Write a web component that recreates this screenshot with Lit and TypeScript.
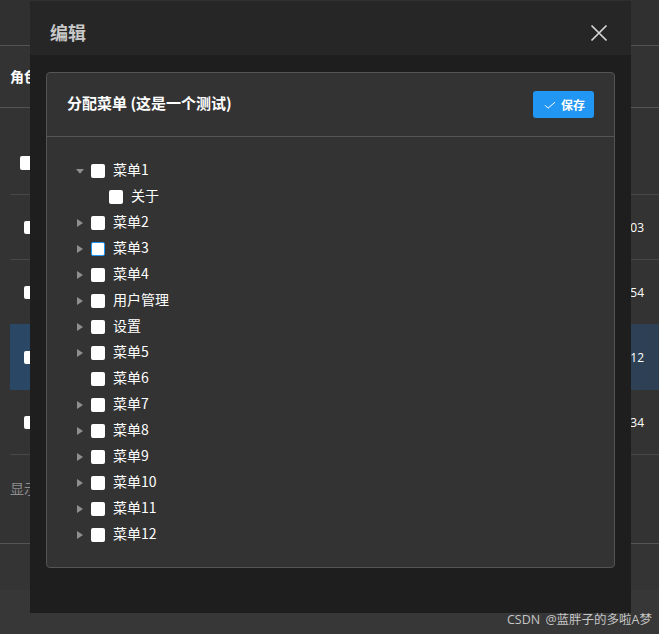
import { LitElement, html, css } from "lit";
import { customElement } from "lit/decorators.js";

interface Node { label: string; arrow?: "open" | "closed"; child?: boolean; focus?: boolean; }
const nodes: Node[] = [
  { label: "菜单1", arrow: "open" },
  { label: "关于", child: true },
  { label: "菜单2", arrow: "closed" },
  { label: "菜单3", arrow: "closed", focus: true },
  { label: "菜单4", arrow: "closed" },
  { label: "用户管理", arrow: "closed" },
  { label: "设置", arrow: "closed" },
  { label: "菜单5", arrow: "closed" },
  { label: "菜单6" },
  { label: "菜单7", arrow: "closed" },
  { label: "菜单8", arrow: "closed" },
  { label: "菜单9", arrow: "closed" },
  { label: "菜单10", arrow: "closed" },
  { label: "菜单11", arrow: "closed" },
  { label: "菜单12", arrow: "closed" },
];
const rows = [
  { t: "03", sel: false },
  { t: "54", sel: false },
  { t: "12", sel: true },
  { t: "34", sel: false },
];

@customElement("app-root")
export class AppRoot extends LitElement {
  static styles = css`
    :host { display: block; position: relative; width: 659px; height: 634px; overflow: hidden; background: #353535; font-family: "Noto Sans CJK SC", "Liberation Sans", sans-serif; color: #fff; font-size: 12px; }
    .page { display: flex; flex-direction: column; height: 634px; }
    .top { height: 45px; border-bottom: 1px solid #545454; background: #303030; flex: none; }
    .main { background: #333; height: 497px; flex: none; border-bottom: 1px solid #545454; }
    .title { height: 61px; border-bottom: 1px solid #545454; padding-left: 10px; display: flex; align-items: center; font-size: 14px; font-weight: 700; }
    .title span { margin-top: -2px; }
    .table { padding: 0 0 0 10px; }
    .thead { height: 87px; display: flex; align-items: center; border-bottom: 1px solid #484848; padding: 24px 0 0 10px; box-sizing: border-box; }
    .thead .cb0 { height: 14px; margin-top: 0; }
    .row { height: 65px; display: flex; align-items: center; justify-content: space-between; padding: 0 15px 0 14px; box-sizing: border-box; border-bottom: 1px solid #484848; }
    .row.before-sel { height: 64px; border-bottom: none; }
    .row.sel { height: 66px; background: linear-gradient(90deg, #2a4866, #2e4054); border-bottom: none; }
    .cell { font-size: 12px; font-family: "Open Sans", sans-serif; }
    .cb0 { width: 12px; height: 13px; border-radius: 2px; background: #fff; display: block; margin-top: 1px; }
    .info { color: #8f8f8f; padding: 23px 0 0 0; font-size: 14px; }
    .bottom { background: #343434; height: 46px; flex: none; }
    .bottom2 { background: #373737; flex: 1; }

    .modal { position: absolute; left: 30px; top: 0; width: 601px; height: 613px; background: #1e1e1e; display: flex; flex-direction: column; }
    .mhead { height: 55px; flex: none; background: #262626; display: flex; align-items: center; justify-content: space-between; padding: 10px 23px 0 20px; box-sizing: border-box; border-top: 1px solid #303030; }
    .mtitle { font-size: 18px; font-weight: 700; color: #c8c8c8; margin-top: -3px; }
    .x { width: 18px; height: 18px; display: block; }
    .mbody { padding: 17px 16px 0; }
    .card { height: 496px; box-sizing: border-box; background: #333; border: 1px solid #545454; border-radius: 4px; }
    .chead { height: 63px; border-bottom: 1px solid #545454; display: flex; align-items: center; justify-content: space-between; padding: 0 20px; }
    .ctitle { font-size: 15px; font-weight: 700; margin-top: -4px; }
    .btn { width: 61px; height: 27px; box-sizing: border-box; background: #2196f3; border-radius: 3px; display: flex; align-items: center; gap: 5px; padding-left: 11px; font-size: 12px; font-weight: 700; color: #fff; }
    .btn svg { width: 12px; height: 12px; display: block; flex: none; }
    .tree { padding: 21px 0 0 27px; }
    .node { height: 26px; display: flex; align-items: center; font-size: 14px; }
    .node.child { padding-left: 35px; }
    .arrow { width: 16px; height: 16px; flex: none; display: block; margin-right: 1px; }
    .box { width: 14px; height: 14px; flex: none; box-sizing: border-box; border-radius: 2px; background: #fff; margin-right: 8px; }
    .box.focus { border: 1px solid #2196f3; }
    .lab { margin-top: -4px; }
    .wm { position: absolute; right: 7px; top: 611px; font-size: 12.5px; color: #c6c6c6; font-weight: 400; line-height: 17px; white-space: nowrap; word-spacing: 2px; font-family: "Open Sans", "Noto Sans CJK SC", sans-serif; }
  `;

  arrow(kind?: "open" | "closed") {
    if (kind === "open")
      return html`<svg class="arrow" viewBox="0 0 16 16"><path d="M2 6h8l-4 4.8z" fill="#8f8f8f"/></svg>`;
    if (kind === "closed")
      return html`<svg class="arrow" viewBox="0 0 16 16"><path d="M3 4v8l6-4z" fill="#8f8f8f"/></svg>`;
    return html`<span class="arrow"></span>`;
  }

  render() {
    return html`
      <div class="page">
        <div class="top"></div>
        <div class="main">
          <div class="title"><span>角色列表</span></div>
          <div class="table">
            <div class="thead"><span class="cb0"></span></div>
            ${rows.map((r, i) => html`<div class="row ${r.sel ? "sel" : ""} ${i === 1 ? "before-sel" : ""}"><span class="cb0"></span><span class="cell">${r.t}</span></div>`)}
            <div class="info">显示</div>
          </div>
        </div>
        <div class="bottom"></div>
        <div class="bottom2"></div>
      </div>
      <div class="modal">
        <div class="mhead">
          <span class="mtitle">编辑</span>
          <svg class="x" viewBox="0 0 18 18"><path d="M1.5 1.5l15 15M16.5 1.5l-15 15" stroke="#d6d6d6" stroke-width="1.7" fill="none"/></svg>
        </div>
        <div class="mbody">
          <div class="card">
            <div class="chead">
              <span class="ctitle">分配菜单 (这是一个测试)</span>
              <span class="btn"><svg viewBox="0 0 12 12"><path d="M1 6.2L4 9.2L11 3.2" stroke="#fff" stroke-width="1" fill="none"/></svg>保存</span>
            </div>
            <div class="tree">
              ${nodes.map((n) => html`<div class="node ${n.child ? "child" : ""}">${n.child ? "" : this.arrow(n.arrow)}<span class="box ${n.focus ? "focus" : ""}"></span><span class="lab">${n.label}</span></div>`)}
            </div>
          </div>
        </div>
      </div>
      <div class="wm">CSDN @蓝胖子的多啦A梦</div>
    `;
  }
}
